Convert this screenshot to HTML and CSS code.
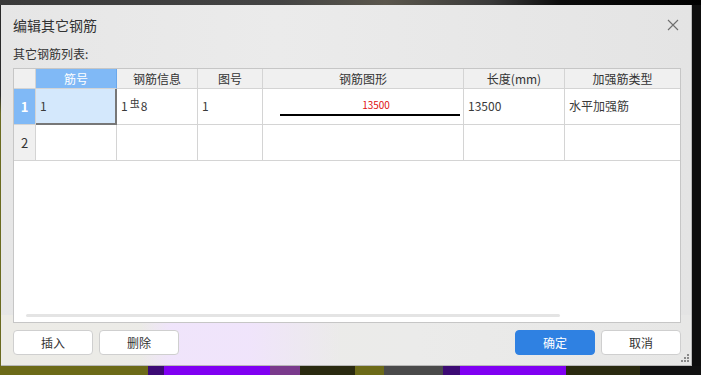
FILE: index.html
```html
<!DOCTYPE html>
<html lang="zh-CN">
<head>
  <meta charset="UTF-8" />
  <meta name="viewport" content="width=device-width, initial-scale=1.0"/>
  <title>编辑其它钢筋</title>
  <link rel="stylesheet" href="styles.css">
</head>
<body>
  <div class="screen">
    <!-- Desktop behind the dialog -->
    <div class="top-strip"></div>

    <div class="middle">
      <div class="left-edge"></div>

      <!-- Dialog -->
      <div class="dialog">
        <div class="title-bar">
          <span class="title">编辑其它钢筋</span>
          <svg class="close" width="12" height="12" viewBox="0 0 12 12">
            <path d="M1 1 L11 11 M11 1 L1 11" stroke="#6e6e6e" stroke-width="1.1" fill="none"/>
          </svg>
        </div>

        <div class="list-label">其它钢筋列表:</div>

        <div class="grid-box">
          <div class="grid">
            <!-- header -->
            <div class="cell head corner"></div>
            <div class="cell head sel-head">筋号</div>
            <div class="cell head">钢筋信息</div>
            <div class="cell head">图号</div>
            <div class="cell head">钢筋图形</div>
            <div class="cell head">长度(mm)</div>
            <div class="cell head last">加强筋类型</div>

            <!-- row 1 -->
            <div class="cell row-head sel-row">1</div>
            <div class="cell data current">1</div>
            <div class="cell data">1<span class="grade">虫</span>8</div>
            <div class="cell data">1</div>
            <div class="cell shape">
              <div class="shape-inner">
                <span class="shape-len">13500</span>
                <div class="shape-line"></div>
              </div>
            </div>
            <div class="cell data">13500</div>
            <div class="cell data last">水平加强筋</div>

            <!-- row 2 -->
            <div class="cell row-head">2</div>
            <div class="cell data"></div>
            <div class="cell data"></div>
            <div class="cell data"></div>
            <div class="cell data"></div>
            <div class="cell data"></div>
            <div class="cell data last"></div>
          </div>
          <div class="h-scroll"></div>
        </div>

        <div class="button-row">
          <div class="left-buttons">
            <button class="btn">插入</button>
            <button class="btn">删除</button>
          </div>
          <div class="right-buttons">
            <button class="btn primary">确定</button>
            <button class="btn">取消</button>
          </div>
        </div>

        <svg class="grip" width="8" height="8" viewBox="0 0 8 8">
          <rect x="6" y="0" width="2" height="2" fill="#8a8a8a"/>
          <rect x="3" y="3" width="2" height="2" fill="#8a8a8a"/>
          <rect x="6" y="3" width="2" height="2" fill="#8a8a8a"/>
          <rect x="0" y="6" width="2" height="2" fill="#8a8a8a"/>
          <rect x="3" y="6" width="2" height="2" fill="#8a8a8a"/>
          <rect x="6" y="6" width="2" height="2" fill="#8a8a8a"/>
        </svg>
      </div>

      <div class="right-edge"></div>
    </div>

    <div class="bottom-strip">
      <div class="seg olive" style="width: 148px"></div>
      <div class="seg dark-purple" style="width: 16px"></div>
      <div class="seg purple" style="width: 106px"></div>
      <div class="seg mauve" style="width: 30px"></div>
      <div class="seg dark-olive" style="width: 55px"></div>
      <div class="seg olive" style="width: 29px"></div>
      <div class="seg gray" style="width: 59px"></div>
      <div class="seg dark-purple" style="width: 17px"></div>
      <div class="seg purple" style="width: 106px"></div>
      <div class="seg dark-olive" style="width: 74px"></div>
      <div class="seg black" style="flex: 1"></div>
    </div>
  </div>
</body>
</html>
```

FILE: styles.css
```css
body {
  margin: 0;
  padding: 0;
  background-color: #151515;
  font-family: "Noto Sans CJK SC", "Noto Sans", sans-serif;
  font-size: 12px;
  color: #333;
}

.screen {
  width: 701px;
  height: 375px;
  display: flex;
  flex-direction: column;
  overflow: hidden;
}

.top-strip {
  height: 5px;
  background: linear-gradient(to right, #3a3a3a 0%, #444 40%, #5a564c 55%, #3a3a3a 70%, #0c0c0c 80%, #000 100%);
}

.middle {
  display: flex;
  height: 361px;
}

.left-edge {
  width: 1px;
  background: linear-gradient(to bottom, #2a2a2a 0%, #2a2a2a 25%, #6a6a20 30%, #6a6a20 100%);
}

.right-edge {
  flex: 1;
  background: #0e0e0e;
}

/* Dialog */
.dialog {
  position: relative;
  width: 691px;
  height: 361px;
  box-sizing: border-box;
  padding: 0 11px 0 12px;
  display: flex;
  flex-direction: column;
  border-right: 1px solid #b8b8b8;
  border-bottom: 1px solid #b8b8b8;
  background:
    linear-gradient(to right, rgba(240, 228, 252, 0) 140px, rgba(240, 228, 252, 0.95) 170px, rgba(240, 228, 252, 0.95) 250px, rgba(240, 228, 252, 0) 340px) bottom / 100% 50px no-repeat,
    linear-gradient(to right, #ecebe6 0%, #ebebea 60%, #e7e7e6 100%) bottom / 100% 50px no-repeat,
    linear-gradient(to right, #e6e6e6 0%, #ebebeb 40%, #e4e4e4 100%);
}

.title-bar {
  height: 40px;
  display: flex;
  align-items: center;
  justify-content: space-between;
}

.title {
  font-size: 14px;
  color: #333;
}

.close {
  margin-right: 1px;
}

.list-label {
  line-height: 17px;
  margin-bottom: 6px;
  color: #333;
}

/* Grid */
.grid-box {
  position: relative;
  width: 668px;
  height: 255px;
  box-sizing: border-box;
  border: 1px solid #c6c6c6;
  background-color: white;
}

.grid {
  display: grid;
  grid-template-columns: 22px 81px 81px 65px 201px 101px 115px;
  grid-template-rows: 20px 36px 36px;
}

.cell {
  box-sizing: border-box;
  border-right: 1px solid #d4d4d4;
  border-bottom: 1px solid #d4d4d4;
  display: flex;
  align-items: center;
  white-space: nowrap;
}

.cell.last {
  border-right: none;
}

.head {
  background-color: #f0f0f0;
  justify-content: center;
  color: #333;
  line-height: 16px;
}

.sel-head {
  background-color: #80b9f6;
  color: white;
  border-right-color: #6aa8ec;
}

.row-head {
  background-color: #f0f0f0;
  justify-content: center;
  color: #333;
  font-size: 13px;
}

.sel-row {
  background-color: #80b9f6;
  color: white;
  font-weight: bold;
}

.data {
  padding: 0 0 2px 4px;
  color: #3a3a3a;
}

.current {
  background-color: #d4e8fc;
  border-right: 2px solid #777;
  border-bottom: 2px solid #777;
}

.grade {
  font-size: 10px;
  position: relative;
  top: -3px;
  margin: 0 1px 0 2px;
}

.shape {
  padding-left: 17px;
}

.shape-inner {
  width: 180px;
  display: flex;
  flex-direction: column;
  align-items: center;
  margin-top: 2px;
}

.shape-len {
  font-size: 10px;
  line-height: 12px;
  color: #e01010;
  margin-left: 12px;
  margin-bottom: 3px;
}

.shape-line {
  width: 180px;
  height: 2px;
  background-color: #000;
}

.h-scroll {
  position: absolute;
  left: 12px;
  top: 245px;
  width: 534px;
  height: 3px;
  border-radius: 2px;
  background-color: #e4e4e4;
}

/* Buttons */
.button-row {
  display: flex;
  justify-content: space-between;
  margin-top: 7px;
  width: 668px;
}

.left-buttons,
.right-buttons {
  display: flex;
  gap: 6px;
}

.btn {
  width: 80px;
  height: 25px;
  box-sizing: border-box;
  border: 1px solid #cfcfcf;
  border-radius: 4px;
  background-color: white;
  font-family: "Noto Sans CJK SC", "Noto Sans", sans-serif;
  font-size: 12px;
  color: #333;
  padding: 0;
}

.btn.primary {
  background-color: #2f81e2;
  border-color: #2f81e2;
  color: white;
}

.grip {
  position: absolute;
  right: 2px;
  bottom: 3px;
}

/* Bottom desktop strip */
.bottom-strip {
  height: 9px;
  display: flex;
}

.seg.olive { background-color: #6c6a18; }
.seg.dark-purple { background-color: #3c0a74; }
.seg.purple { background-color: #8000f2; }
.seg.mauve { background-color: #7a3a8c; }
.seg.dark-olive { background-color: #2a2a10; }
.seg.gray { background-color: #4a4a4a; }
.seg.black { background-color: #111; }
```
